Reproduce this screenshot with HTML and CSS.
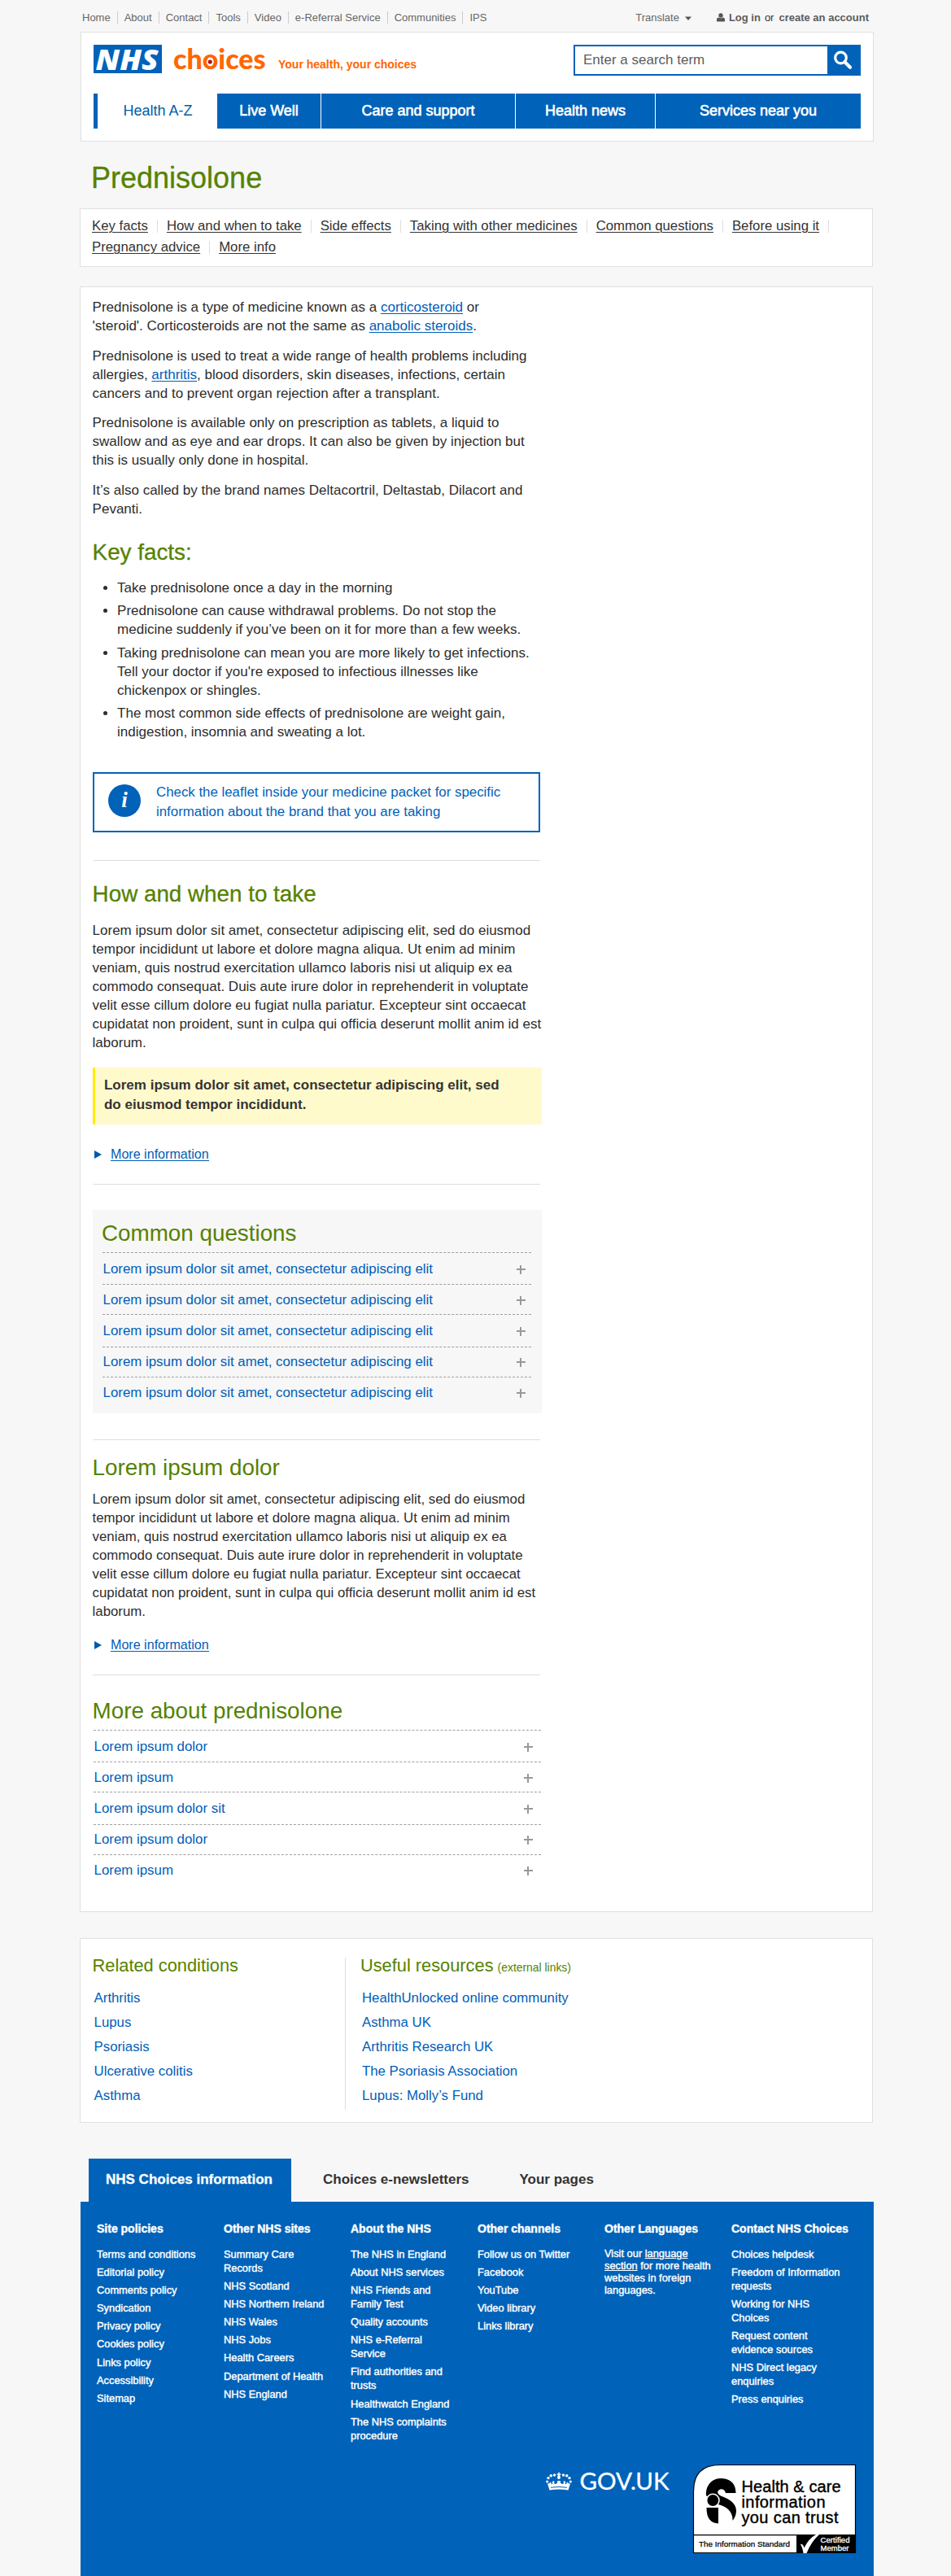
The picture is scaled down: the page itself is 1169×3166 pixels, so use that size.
FILE: index.html
```html
<!DOCTYPE html>
<html lang="en">
<head>
<meta charset="utf-8">
<title>Prednisolone - NHS Choices</title>
<link rel="stylesheet" href="styles.css">
</head>
<body>
<div class="topbar">
  <ul class="topbar-links">
    <li>Home</li><li>About</li><li>Contact</li><li>Tools</li><li>Video</li><li>e-Referral Service</li><li>Communities</li><li>IPS</li>
  </ul>
  <div class="account">
    <span class="translate">Translate</span>
    <svg class="caret" width="10" height="6" viewBox="0 0 10 6"><path d="M1 0.5h8L5 5z" fill="#555"/></svg>
    <svg class="user" width="10" height="11" viewBox="0 0 10 11"><circle cx="5" cy="3" r="2.7" fill="#555"/><path d="M0 10V8.200Q0 5.500 2.600 5.500Q5 7.200 7.400 5.500Q10 5.500 10 8.200V10Q10 10.600 9 10.600H1Q0 10.600 0 10z" fill="#555"/></svg>
    <b>Log in</b><span class="or">or</span><b>create an account</b>
  </div>
</div>

<header class="header">
  <div class="header-row">
    <svg class="logo" width="215" height="50" viewBox="0 0 215 50">
      <rect width="84" height="35" fill="#0062b9"/>
      <text class="logo-nhs" x="2.500" y="31" textLength="77" lengthAdjust="spacingAndGlyphs">NHS</text>
      <text class="logo-choices" x="98" y="29.500" textLength="113.500" lengthAdjust="spacingAndGlyphs">choices</text>
      <circle cx="143.200" cy="21" r="4.300" fill="#fff"/>
      <circle cx="143.200" cy="21" r="2.600" fill="#b5121b"/>
    </svg>
    <span class="strapline">Your health, your choices</span>
    <div class="search">
      <span class="search-input">Enter a search term</span>
      <span class="search-button"><svg width="24" height="24" viewBox="0 0 24 24" fill="none" stroke="#fff"><circle cx="9.500" cy="9" r="6.800" stroke-width="3.200"/><path d="M14.500 14.200L21 20.800" stroke-width="4.200" stroke-linecap="round"/></svg></span>
    </div>
  </div>
  <nav class="nav"><span class="active">Health A-Z</span><span>Live Well</span><span>Care and support</span><span>Health news</span><span>Services near you</span></nav>
</header>

<h1>Prednisolone</h1>

<ul class="jump">
  <li><a>Key facts</a></li><li><a>How and when to take</a></li><li><a>Side effects</a></li><li><a>Taking with other medicines</a></li><li><a>Common questions</a></li><li><a>Before using it</a></li><li><a>Pregnancy advice</a></li><li><a>More info</a></li>
</ul>

<main class="panel main">
  <p>Prednisolone is a type of medicine known as a <a>corticosteroid</a> or<br>'steroid'. Corticosteroids are not the same as <a>anabolic steroids</a>.</p>
  <p>Prednisolone is used to treat a wide range of health problems including<br>allergies, <a>arthritis</a>, blood disorders, skin diseases, infections, certain<br>cancers and to prevent organ rejection after a transplant.</p>
  <p class="tight">Prednisolone is available only on prescription as tablets, a liquid to<br>swallow and as eye and ear drops. It can also be given by injection but<br>this is usually only done in hospital.</p>
  <p>It’s also called by the brand names Deltacortril, Deltastab, Dilacort and<br>Pevanti.</p>
  <h2 class="key">Key facts:</h2>
  <ul class="facts">
    <li>Take prednisolone once a day in the morning</li>
    <li>Prednisolone can cause withdrawal problems. Do not stop the<br>medicine suddenly if you’ve been on it for more than a few weeks.</li>
    <li>Taking prednisolone can mean you are more likely to get infections.<br>Tell your doctor if you're exposed to infectious illnesses like<br>chickenpox or shingles.</li>
    <li>The most common side effects of prednisolone are weight gain,<br>indigestion, insomnia and sweating a lot.</li>
  </ul>
  <div class="info"><span class="info-icon">i</span><span>Check the leaflet inside your medicine packet for specific<br>information about the brand that you are taking</span></div>
  <hr class="after-info">
  <h2 class="how">How and when to take</h2>
  <p class="how-text">Lorem ipsum dolor sit amet, consectetur adipiscing elit, sed do eiusmod<br>tempor incididunt ut labore et dolore magna aliqua. Ut enim ad minim<br>veniam, quis nostrud exercitation ullamco laboris nisi ut aliquip ex ea<br>commodo consequat. Duis aute irure dolor in reprehenderit in voluptate<br>velit esse cillum dolore eu fugiat nulla pariatur. Excepteur sint occaecat<br>cupidatat non proident, sunt in culpa qui officia deserunt mollit anim id est<br>laborum.</p>
  <div class="warning">Lorem ipsum dolor sit amet, consectetur adipiscing elit, sed<br>do eiusmod tempor incididunt.</div>
  <div class="more more-first"><svg width="9" height="10" viewBox="0 0 9 10"><path d="M0 0L9 5L0 10z" fill="#0058ab"/></svg><a>More information</a></div>
  <hr class="after-more">
  <section class="questions">
    <h2>Common questions</h2>
    <ul class="accordion">
      <li>Lorem ipsum dolor sit amet, consectetur adipiscing elit<i class="plus"></i></li>
      <li>Lorem ipsum dolor sit amet, consectetur adipiscing elit<i class="plus"></i></li>
      <li>Lorem ipsum dolor sit amet, consectetur adipiscing elit<i class="plus"></i></li>
      <li>Lorem ipsum dolor sit amet, consectetur adipiscing elit<i class="plus"></i></li>
      <li>Lorem ipsum dolor sit amet, consectetur adipiscing elit<i class="plus"></i></li>
    </ul>
  </section>
  <hr class="after-questions">
  <h2 class="lorem">Lorem ipsum dolor</h2>
  <p class="lorem-text">Lorem ipsum dolor sit amet, consectetur adipiscing elit, sed do eiusmod<br>tempor incididunt ut labore et dolore magna aliqua. Ut enim ad minim<br>veniam, quis nostrud exercitation ullamco laboris nisi ut aliquip ex ea<br>commodo consequat. Duis aute irure dolor in reprehenderit in voluptate<br>velit esse cillum dolore eu fugiat nulla pariatur. Excepteur sint occaecat<br>cupidatat non proident, sunt in culpa qui officia deserunt mollit anim id est<br>laborum.</p>
  <div class="more more-second"><svg width="9" height="10" viewBox="0 0 9 10"><path d="M0 0L9 5L0 10z" fill="#0058ab"/></svg><a>More information</a></div>
  <hr class="after-more">
  <h2 class="about">More about prednisolone</h2>
  <ul class="accordion wide">
    <li>Lorem ipsum dolor<i class="plus"></i></li>
    <li>Lorem ipsum<i class="plus"></i></li>
    <li>Lorem ipsum dolor sit<i class="plus"></i></li>
    <li>Lorem ipsum dolor<i class="plus"></i></li>
    <li>Lorem ipsum<i class="plus"></i></li>
  </ul>
</main>

<section class="panel related">
  <div class="related-conditions">
    <h3>Related conditions</h3>
    <ul><li>Arthritis</li><li>Lupus</li><li>Psoriasis</li><li>Ulcerative colitis</li><li>Asthma</li></ul>
  </div>
  <div class="resources">
    <h3>Useful resources <small>(external links)</small></h3>
    <ul><li>HealthUnlocked online community</li><li>Asthma UK</li><li>Arthritis Research UK</li><li>The Psoriasis Association</li><li>Lupus: Molly’s Fund</li></ul>
  </div>
</section>

<div class="tabs"><span class="tab-active">NHS Choices information</span><span>Choices e-newsletters</span><span>Your pages</span></div>
<footer class="footer">
  <div class="footer-columns">
    <div><h4>Site policies</h4><ul><li>Terms and conditions</li><li>Editorial policy</li><li>Comments policy</li><li>Syndication</li><li>Privacy policy</li><li>Cookies policy</li><li>Links policy</li><li>Accessibility</li><li>Sitemap</li></ul></div>
    <div><h4>Other NHS sites</h4><ul><li>Summary Care<br>Records</li><li>NHS Scotland</li><li>NHS Northern Ireland</li><li>NHS Wales</li><li>NHS Jobs</li><li>Health Careers</li><li>Department of Health</li><li>NHS England</li></ul></div>
    <div><h4>About the NHS</h4><ul><li>The NHS in England</li><li>About NHS services</li><li>NHS Friends and<br>Family Test</li><li>Quality accounts</li><li>NHS e-Referral<br>Service</li><li>Find authorities and<br>trusts</li><li>Healthwatch England</li><li>The NHS complaints<br>procedure</li></ul></div>
    <div><h4>Other channels</h4><ul><li>Follow us on Twitter</li><li>Facebook</li><li>YouTube</li><li>Video library</li><li>Links library</li></ul></div>
    <div><h4>Other Languages</h4><p>Visit our <u>language</u><br><u>section</u> for more health<br>websites in foreign<br>languages.</p></div>
    <div><h4>Contact NHS Choices</h4><ul><li>Choices helpdesk</li><li>Freedom of Information<br>requests</li><li>Working for NHS<br>Choices</li><li>Request content<br>evidence sources</li><li>NHS Direct legacy<br>enquiries</li><li>Press enquiries</li></ul></div>
  </div>
  <div class="footer-logos">
    <svg class="govuk" width="156" height="40" viewBox="0 0 156 40">
      <g fill="#fff">
        <path d="M15.300 0.500h1.400v1.800h1.800v1.500h-1.500l1 3.200a1.900 1.900 0 1 1-4 0l1-3.200h-1.500V2.300h1.800z"/>
        <circle cx="10.500" cy="4" r="1.700"/><circle cx="6.300" cy="4.800" r="1.800"/><circle cx="3" cy="7.600" r="1.700"/><circle cx="1.700" cy="12" r="1.600"/>
        <circle cx="21.500" cy="4" r="1.700"/><circle cx="25.700" cy="4.800" r="1.800"/><circle cx="29" cy="7.600" r="1.700"/><circle cx="30.300" cy="12" r="1.600"/>
        <path d="M2 14.500Q4.500 15 5.500 12.500L6.500 13.500Q6.500 15.500 8 15Q9 14 7.500 12.500L10 11Q11 12.500 10 14Q11.500 16 13.500 14Q15 12.500 14 11H18Q17 12.500 18.500 14Q20.500 16 22 14Q21 12.500 22 11L24.500 12.500Q23 14 24 15Q25.500 15.500 25.500 13.500L26.500 12.500Q27.500 15 30 14.500L27.500 22.500Q16 20.500 4.500 22.500z"/>
      </g>
      <path d="M6 19.300Q16 17.500 26 19.300" stroke="#0062b9" stroke-width="1" fill="none"/>
      <text x="41.500" y="22" textLength="110" lengthAdjust="spacingAndGlyphs">GOV.UK</text>
    </svg>
    <svg class="badge" width="200" height="109" viewBox="0 0 200 109">
      <path d="M0.500 108.500V33Q0.500 0.500 33 0.500H199.500V108.500z" fill="#fff" stroke="#000" stroke-width="1.200"/>
      <path d="M0 86.700H200" stroke="#000" stroke-width="1.200"/>
      <path d="M127 86.500H200V109H127z"/>
      <path d="M132 98Q135 97 136.500 102.500Q142 91 151 86H155Q145 95 139.500 109H135.500Q134.500 102 132 98z" fill="#fff"/>
      <path d="M16 38C15 26 23 17 34 17C45 17 52.500 23 52.500 35H40C39 30 34 29 31 32C29 34.500 31 37 34 38.500C46 43 53 48 53 57C53 62 51 66 48.500 69C49 58 42 52 31 49Z"/>
      <circle cx="24.300" cy="44" r="7.700" stroke="#fff" stroke-width="1.600"/>
      <path d="M16.500 53H31V72.500C22 72 16.500 67 16.500 53z"/>
      <g class="badge-title"><text x="59.500" y="33.500" textLength="122">Health &amp; care</text><text x="59.500" y="52.800" textLength="103">information</text><text x="59.500" y="72.200" textLength="119">you can trust</text></g>
      <text class="badge-name" x="7" y="101" textLength="112">The Information Standard</text>
      <g class="badge-member"><text x="156.500" y="95.800" textLength="36">Certified</text><text x="156.500" y="106.300" textLength="35">Member</text></g>
    </svg>
  </div>
</footer>
</body>
</html>
```

FILE: styles.css
```css
* { box-sizing: border-box; }
body { margin: 0; background: #f7f7f7; color: #2d2d2d; font: 17px/23px "Liberation Sans", Arial, sans-serif; }
ul, h1, h2, h3, h4, p { margin: 0; padding: 0; font-weight: 400; list-style: none; }
svg { display: block; flex: none; overflow: visible; }

.topbar { display: flex; justify-content: space-between; width: 975px; margin-left: 99px; height: 39px; padding: 14px 6px 0 2px; font-size: 13px; line-height: 15px; color: #666; }
.topbar-links { display: flex; }
.topbar-links li { height: 15px; padding-right: 8px; margin-right: 8px; border-right: 1px solid #ccc; white-space: nowrap; line-height: 16px; }
.topbar-links li:last-child { border: 0; }
.account { display: flex; line-height: 16px; height: 15px; }
.account b { color: #5c5c5c; }
.caret { margin: 6px 30px 0 6px; }
.user { margin: 2px 5px 0 0; }
.or { margin: 0 6px 0 5px; color: #333; }

.header { width: 975px; height: 135px; margin-left: 99px; padding: 15px; border: 1px solid #e0e0e0; background: #fff; }
.header-row { display: flex; height: 60px; }
.logo-nhs { font: italic 800 35.500px "Open Sans", sans-serif; fill: #fff; }
.logo-choices { font: 900 34px Lato, sans-serif; fill: #ff6600; }
.strapline { margin: 15px 0 0 12px; font-size: 14px; font-weight: 700; line-height: 18px; color: #ff6600; white-space: nowrap; }
.search { display: flex; width: 353px; height: 38px; margin-left: auto; border: 2px solid #0062b9; }
.search-input { flex: 1; padding: 5px 0 0 10px; color: #5c5c5c; }
.search-button { width: 39px; padding: 5px 0 0 7px; background: #0062b9; }
.nav { display: grid; grid-template-columns: 151px 127px 238px 171px 252px; gap: 1px; height: 43px; font-size: 18px; line-height: 42px; text-align: center; }
.nav span { background: #0062b9; color: #fff; -webkit-text-stroke: 0.600px #fff; }
.nav .active { border-left: 5px solid #0062b9; background: #fff; color: #005ea8; -webkit-text-stroke: 0; padding-left: 2px; }

h1 { margin: 24px 0 17px 112px; height: 41px; font-size: 36px; line-height: 41px; color: #568200; -webkit-text-stroke: 0.300px #568200; }
.jump { display: flex; flex-wrap: wrap; align-content: flex-start; width: 975px; height: 72px; margin: 0 0 0 98px; padding: 8px 14px 0 14px; border: 1px solid #e0e0e0; background: #fff; font-size: 16.750px; line-height: 26px; color: #333; }
.jump li { display: flex; align-items: center; white-space: nowrap; }
.jump li::after { content: ""; width: 1px; height: 16px; margin: 0 11px; background: #ddd; }
.jump li:last-child::after { display: none; }
.jump a { text-decoration: underline; text-underline-offset: 2px; text-decoration-thickness: 1px; }

.panel { width: 975px; margin-left: 98px; border: 1px solid #e0e0e0; background: #fff; }
.main { margin-top: 24px; height: 1998px; padding: 13px 406px 0 14.600px; white-space: nowrap; }
.main p + p { margin-top: 14px; }
.main p.tight { margin-top: 13px; }
.main p a { color: #005eb8; text-decoration: underline; text-underline-offset: 2px; text-decoration-thickness: 1px; }
h2 { height: 31px; font-size: 27.800px; line-height: 31px; color: #568200; }
.key, .how { -webkit-text-stroke: 0.300px #568200; }
.key { margin-top: 26px; }
.facts { margin: 17px 0 0 30.500px; }
.facts li { position: relative; margin-bottom: 5px; }
.facts li:nth-child(2) { margin-bottom: 6px; }
.facts li::before { content: ""; position: absolute; left: -17px; top: 9px; width: 5px; height: 5px; border-radius: 50%; background: #2d2d2d; }
.info { display: flex; width: 550px; height: 74px; margin: 38px 0 0 0.400px; padding: 11px 0 0 17px; border: 2px solid #0062b9; color: #0062b9; font-size: 16.850px; line-height: 24px; }
.info-icon { width: 40px; height: 40px; margin: 2px 19px 0 0; border-radius: 50%; background: #0062b9; color: #fff; font: italic 700 27px/38px "Liberation Serif", serif; text-align: center; }
hr { width: 550px; height: 1px; margin: 0 0 0 0.400px; border: 0; background: #dedede; }
.after-info { margin-top: 34px; }
.how { margin-top: 25px; }
.how-text { margin-top: 18px; }
.warning { width: 552px; height: 70px; margin: 19px 0 0 0.400px; padding: 10px 0 0 11px; border-left: 3px solid #ffec00; background: #fffacb; font-weight: 700; line-height: 24px; color: #333; }
.more { display: flex; height: 20px; padding-left: 2.400px; font-size: 16.100px; line-height: 20px; color: #005eb8; }
.more svg { margin: 6px 11px 0 0; }
.more a { border-bottom: 1px solid #005eb8; height: 19px; }
.more-first { margin-top: 26px; }
.more-second { margin-top: 19px; }
.after-more { margin-top: 27px; }
.questions { width: 552px; height: 250px; margin: 31px 0 0 0.400px; padding: 13px 13px 0 12px; background: #f7f7f7; }
.questions h2 { margin-left: -1px; }
.accordion { margin-top: 8px; font-size: 16.850px; line-height: 22px; color: #005eb8; }
.accordion li { display: flex; justify-content: space-between; align-items: center; border-top: 1px dashed #a0a0a0; padding: 9px 7px 7px 0.600px; }
.accordion li:nth-child(2) { padding-top: 8px; padding-bottom: 6px; }
.accordion li:nth-child(3) { padding-top: 9px; padding-bottom: 8px; }
.accordion li:nth-child(4) { padding-top: 7px; padding-bottom: 7px; }
.accordion li:nth-child(5) { padding-top: 8px; padding-bottom: 0; }
.plus { width: 11px; height: 11px; background: linear-gradient(#999, #999) center / 2px 11px no-repeat, linear-gradient(#999, #999) center / 11px 2px no-repeat; }
.accordion.wide { width: 550px; margin-left: 1.400px; }
.accordion.wide .plus { margin-right: 3px; }
.after-questions { margin-top: 32px; }
.lorem { margin-top: 18px; }
.lorem-text { margin-top: 12px; font-size: 16.800px; }
.about { margin-top: 28px; }

.related { display: flex; height: 227px; margin-top: 32px; padding: 23px 0 0 14.600px; }
.related h3 { height: 26px; margin-top: -3px; font-size: 21.800px; line-height: 26px; color: #568200; white-space: nowrap; }
.related small { font-size: 13.900px; line-height: 1; margin-left: -1px; }
.related ul { margin: 12px 0 0 2px; font-size: 16.800px; line-height: 30px; color: #005eb8; }
.related-conditions { width: 311.400px; height: 187px; border-right: 1px solid #ddd; }
.resources { padding-left: 18px; }

.tabs { display: flex; margin: 44px 0 0 109px; height: 53px; font-size: 17px; font-weight: 700; line-height: 52px; color: #333; }
.tab-active { width: 249px; padding-left: 21px; background: #0062b9; color: #fff; margin-right: 39px; -webkit-text-stroke: 0.300px #fff; }
.tabs span + span { margin-right: 62px; }
.footer { width: 975px; height: 460px; margin-left: 99px; padding: 23px 0 0 20px; background: #0062b9; color: #fff; }
.footer-columns { display: grid; grid-template-columns: repeat(6, 156px); height: 300px; white-space: nowrap; font-size: 12.850px; line-height: 17px; -webkit-text-stroke: 0.400px #fff; }
.footer h4 { height: 33px; font-size: 14px; font-weight: 700; line-height: 20px; }
.footer li { padding-bottom: 5.100px; }
.footer-columns p { line-height: 15px; }
.footer-logos { display: flex; align-items: flex-start; }
.govuk { margin: 9px 25px 0 552px; }
.govuk text { font: 400 28px Lato, sans-serif; fill: #fff; stroke: #fff; stroke-width: 0.300px; }
.badge text { font-family: "Liberation Sans", Arial, sans-serif; }
.badge-title { font-size: 20px; stroke: #000; stroke-width: 0.400px; }
.badge-name { font-size: 9.900px; stroke: #000; stroke-width: 0.250px; }
.badge-member { font-size: 9.500px; fill: #fff; stroke: #fff; stroke-width: 0.300px; }
```
